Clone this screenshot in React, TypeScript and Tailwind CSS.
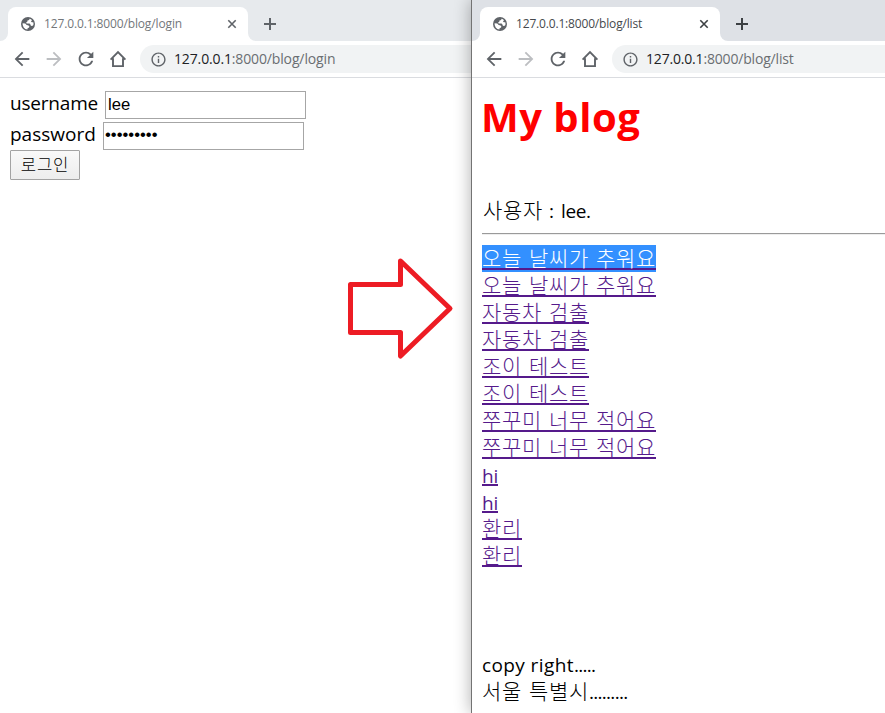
import type { ReactNode } from 'react'
import { MdArrowBack, MdArrowForward, MdRefresh, MdInfoOutline } from 'react-icons/md'

const posts = [
  '오늘 날씨가 추워요',
  '오늘 날씨가 추워요',
  '자동차 검출',
  '자동차 검출',
  '조이 테스트',
  '조이 테스트',
  '쭈꾸미 너무 적어요',
  '쭈꾸미 너무 적어요',
  'hi',
  'hi',
  '환리',
  '환리',
]

const korean =
  'font-["Noto_Sans_CJK_KR",sans-serif] font-light text-[21px] tracking-[0.64px] [word-spacing:1.8px] whitespace-nowrap'
const latin = 'font-["Open_Sans",sans-serif] text-[19px] whitespace-nowrap'

function Globe() {
  return (
    <svg className="size-[14px] shrink-0" viewBox="0 0 14 14">
      <circle cx="7" cy="7" r="7" fill="#5f6368" />
      <path
        d="M8.400 1.700 8.200 3 6.500 3.400 6.300 4.700 5.200 5.300 5.600 6.500H8.600L9.600 7.700 9.800 8.700 11.200 8.900 12.400 7.900A5.500 5.500 0 0 0 12.300 5.300L10.800 5.200 9.900 4.300 11.100 3.200A5.500 5.500 0 0 0 8.400 1.700Z"
        fill="#fff"
      />
      <path
        d="M1.600 6.300A5.500 5.500 0 0 0 6.400 12.500L6.600 11.200 8.100 10.400 8.300 9 6.800 8.200 5.700 8 4.300 6.600Z"
        fill="#fff"
      />
    </svg>
  )
}

function Home() {
  return (
    <svg className="ml-3 h-[18px] w-[18px] shrink-0" viewBox="0 0 18 18" fill="none" stroke="#5f6368" strokeWidth="1.9">
      <path d="M1.600 9.700 9 2.200l7.400 7.500M4 8.200v7.900h10V8.200" />
    </svg>
  )
}

function Chrome({ path, active, children }: { path: string; active: boolean; children: ReactNode }) {
  const list = path === 'list'
  return (
    <div className="flex h-full w-full flex-col bg-white">
      <div className={`flex h-[41px] shrink-0 items-end ${active ? 'bg-[#dee1e6]' : 'bg-[#e7eaed]'}`}>
        <div className="h-2 w-2 bg-white">
          <div className={`h-2 w-2 rounded-br-lg ${active ? 'bg-[#dee1e6]' : 'bg-[#e7eaed]'}`} />
        </div>
        <div className="flex h-[34px] w-[240px] items-center rounded-t-lg bg-white pl-[13px] pr-[11px]">
          <Globe />
          <span
            className={`ml-[9px] flex-1 whitespace-nowrap font-["Open_Sans",sans-serif] text-[12px] ${active ? 'tracking-[-0.17px] text-[#45494d]' : 'tracking-[-0.13px] text-[#73777b]'}`}
          >
            127.0.0.1:8000/blog/{path}
          </span>
          <svg className="size-[10px]" viewBox="0 0 10 10" stroke={active ? '#3c4043' : '#5f6368'} strokeWidth="1.6">
            <path d="M1.300 1.300 8.700 8.700M8.700 1.300 1.300 8.700" />
          </svg>
        </div>
        <div className="h-2 w-2 bg-white">
          <div className={`h-2 w-2 rounded-bl-lg ${active ? 'bg-[#dee1e6]' : 'bg-[#e7eaed]'}`} />
        </div>
        <svg className="mb-[11px] ml-2 size-3" viewBox="0 0 12 12" stroke={active ? '#3c4043' : '#5f6368'} strokeWidth="2">
          <path d="M6 0v12M0 6h12" />
        </svg>
      </div>
      <div className="flex h-[37px] shrink-0 items-center border-b border-[#dadce0] pl-[11px]">
        <MdArrowBack size={22} color="#5f6368" />
        <MdArrowForward size={22} color="#bcbec1" className="ml-[10px]" />
        <MdRefresh size={22} color="#5f6368" className="ml-[10px]" />
        <Home />
        <div className="ml-[13px] flex h-7 flex-1 items-center rounded-l-full bg-[#f1f3f4] pl-[10px]">
          <MdInfoOutline size={17} color="#5f6368" />
          <span
            className={`-mt-[1px] ml-[7px] whitespace-nowrap font-["Open_Sans",sans-serif] text-[14px] text-[#6a6e72] ${list ? 'tracking-[-0.18px]' : 'tracking-[-0.14px]'}`}
          >
            <span className="text-[#202124]">127.0.0.1</span>:8000/blog/{path}
          </span>
        </div>
      </div>
      {children}
    </div>
  )
}

function LoginPage() {
  const field = 'h-7 w-[201px] border border-[#a6a6a6] bg-white font-["Liberation_Sans",sans-serif] text-[16.67px] text-black'
  return (
    <form className="flex flex-col items-start pl-[10px] pt-[13px] text-black">
      <label className="flex h-[31px] items-start">
        <span className={`${latin} -mt-[2px] w-[95px] leading-7 tracking-[-0.2px]`}>username</span>
        <input className={`${field} pl-[2px]`} defaultValue="lee" />
      </label>
      <label className="flex h-7 items-start">
        <span className={`${latin} -mt-[2px] w-[93px] leading-7`}>password</span>
        <input className={`${field} pb-[2px] pl-[1px]`} defaultValue="•••••••••" />
      </label>
      <button
        type="button"
        className='h-[30px] w-[70px] rounded-[1px] border border-[#a3a3a3] bg-gradient-to-b from-[#f9f9f9] to-[#ededed] pb-[2px] font-["Noto_Sans_CJK_KR",sans-serif] text-[16.67px] font-light leading-[26px] tracking-[0.9px]'
      >
        로그인
      </button>
    </form>
  )
}

function ListPage() {
  return (
    <main className="flex flex-col pl-[10px] text-black">
      <h1 className='-ml-[1px] mt-[11px] h-[57px] whitespace-nowrap font-["Open_Sans",sans-serif] text-[40px] font-bold leading-[56px] tracking-[0.5px] text-[#ff0000]'>
        My blog
      </h1>
      <p className="mt-[48px] flex h-[32px] items-baseline leading-[30px]">
        <span className={`${korean} pl-[1px]`}>사용자</span>
        <span className={`${latin} ml-[6px]`}>:</span>
        <span className={`${latin} ml-[7px] tracking-[-0.3px]`}>lee.</span>
      </p>
      <hr className="mt-[7px] h-[2px] border-b border-t border-b-[#eeeeee] border-t-[#9a9a9a]" />
      <ul className="mt-[10px]">
        {posts.map((post, i) => (
          <li key={i} className="flex h-[27px] items-start">
            <div className={`h-[27px] ${i === 0 ? 'bg-[#3390ff] text-white' : 'text-[#551a8b]'}`}>
              <a
                className={`block h-[25px] border-b-2 border-[#551a8b] ${post === 'hi' ? `${latin} leading-[31px] tracking-[-0.2px]` : `${korean} leading-[25px]`}`}
              >
                {post}
              </a>
            </div>
          </li>
        ))}
      </ul>
      <footer className="mt-[83px]">
        <p className={`${latin} h-[25px] leading-[27px]`}>
          <span className="tracking-[0.4px]">copy right</span>
          <span className="tracking-[-0.75px]">.....</span>
        </p>
        <p className="flex h-[27px] items-baseline leading-[27px]">
          <span className={korean}>서울 특별시</span>
          <span className={`${latin} tracking-[-0.7px]`}>.........</span>
        </p>
      </footer>
    </main>
  )
}

export default function App() {
  return (
    <div className="relative flex h-[713px] w-[885px] overflow-hidden bg-white">
      <section className="w-[471px] shrink-0">
        <Chrome path="login" active={false}>
          <LoginPage />
        </Chrome>
      </section>
      <section className="z-10 w-[414px] shrink-0 border-l border-[#737373] shadow-[0_0_16px_rgba(0,0,0,0.32)]">
        <Chrome path="list" active>
          <ListPage />
        </Chrome>
      </section>
      <svg className="absolute left-[340px] top-[250px] z-20 h-[116px] w-[120px]" viewBox="340 250 120 116" fill="none">
        <path
          d="M350.500 284.500H400.500V261L450 308.500 400.500 356V332.500H350.500Z"
          stroke="#ed1c24"
          strokeWidth="5"
          strokeLinejoin="round"
        />
      </svg>
    </div>
  )
}
